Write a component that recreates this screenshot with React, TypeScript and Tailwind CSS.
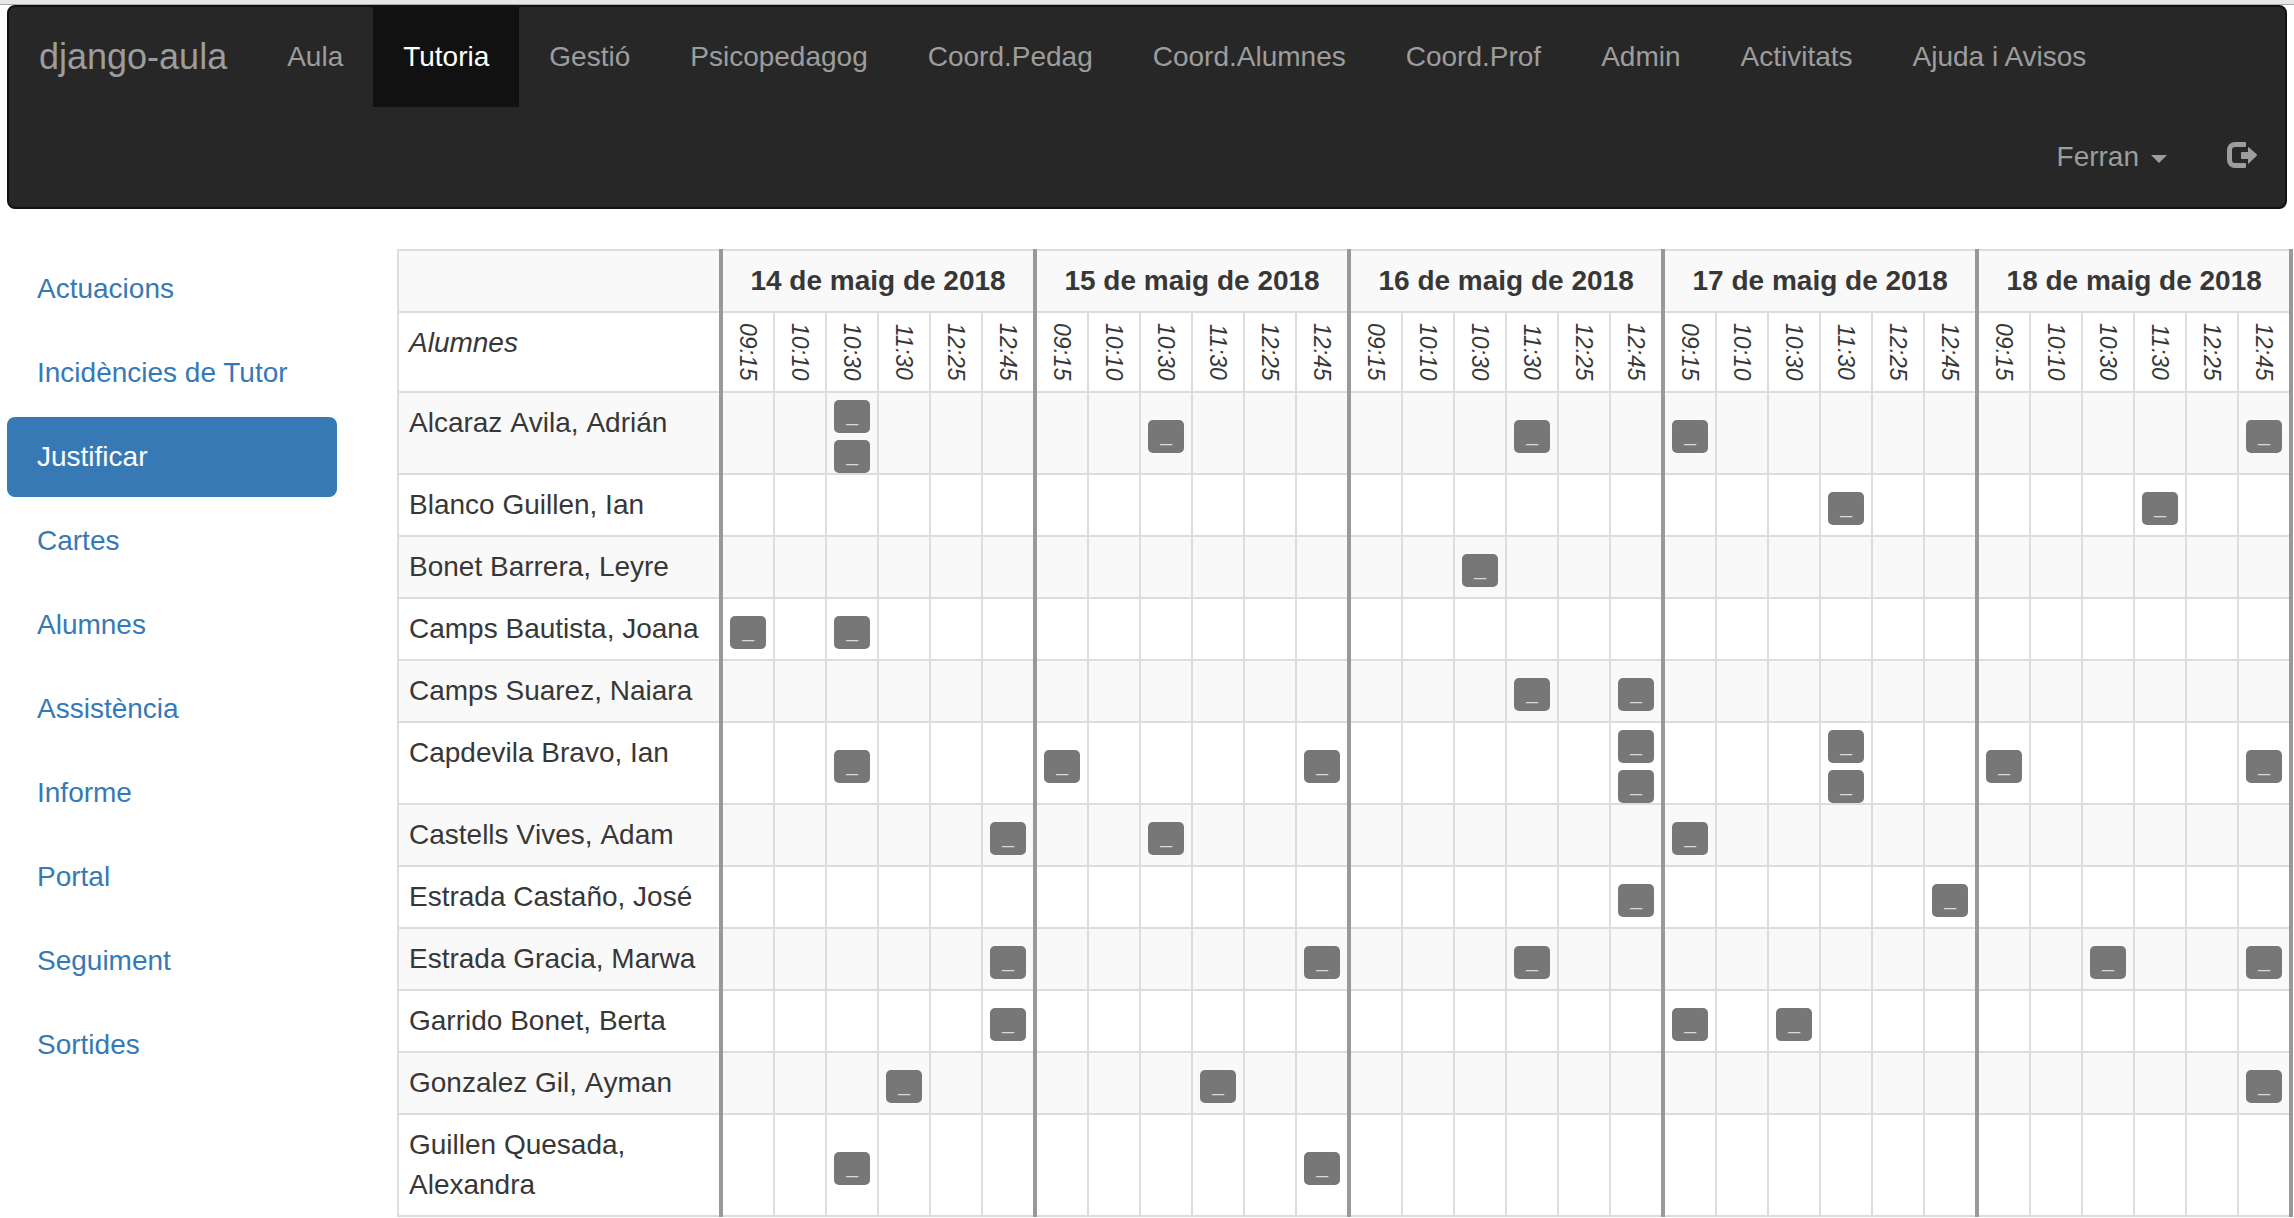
import React from 'react';

const NAV = ['Aula', 'Tutoria', 'Gestió', 'Psicopedagog', 'Coord.Pedag', 'Coord.Alumnes', 'Coord.Prof', 'Admin', 'Activitats', 'Ajuda i Avisos'];
const SIDE = ['Actuacions', 'Incidències de Tutor', 'Justificar', 'Cartes', 'Alumnes', 'Assistència', 'Informe', 'Portal', 'Seguiment', 'Sortides'];
const DAYS = [14, 15, 16, 17, 18].map((d) => `${d} de maig de 2018`);
const HOURS = ['09:15', '10:10', '10:30', '11:30', '12:25', '12:45'];

type Student = { name: string; marks: Record<string, number> };

/* Keys of `marks` are "day-hour" indexes; values are the number of absences. */
const STUDENTS: Student[] = [
  { name: 'Alcaraz Avila, Adrián', marks: { '0-2': 2, '1-2': 1, '2-3': 1, '3-0': 1, '4-5': 1 } },
  { name: 'Blanco Guillen, Ian', marks: { '3-3': 1, '4-3': 1 } },
  { name: 'Bonet Barrera, Leyre', marks: { '2-2': 1 } },
  { name: 'Camps Bautista, Joana', marks: { '0-0': 1, '0-2': 1 } },
  { name: 'Camps Suarez, Naiara', marks: { '2-3': 1, '2-5': 1 } },
  { name: 'Capdevila Bravo, Ian', marks: { '0-2': 1, '1-0': 1, '1-5': 1, '2-5': 2, '3-3': 2, '4-0': 1, '4-5': 1 } },
  { name: 'Castells Vives, Adam', marks: { '0-5': 1, '1-2': 1, '3-0': 1 } },
  { name: 'Estrada Castaño, José', marks: { '2-5': 1, '3-5': 1 } },
  { name: 'Estrada Gracia, Marwa', marks: { '0-5': 1, '1-5': 1, '2-3': 1, '4-2': 1, '4-5': 1 } },
  { name: 'Garrido Bonet, Berta', marks: { '0-5': 1, '3-0': 1, '3-2': 1 } },
  { name: 'Gonzalez Gil, Ayman', marks: { '0-3': 1, '1-3': 1, '4-5': 1 } },
  { name: 'Guillen Quesada, Alexandra', marks: { '0-2': 1, '1-5': 1 } },
];

function hourBorder(h: number) {
  if (h === 0) return 'border-y-2 border-l-4 border-r-2 border-y-[#ddd] border-l-[#999] border-r-[#ddd]';
  if (h === HOURS.length - 1) return 'border-y-2 border-l-2 border-r-4 border-y-[#ddd] border-l-[#ddd] border-r-[#999]';
  return 'border-2 border-[#ddd]';
}

function Mark({ label }: { label: string }) {
  return (
    <div className="flex h-10 items-end justify-center">
      <button type="button" aria-label={label} className="h-[33px] w-9 rounded-[5px] bg-[#777] pb-[6px] text-center text-[21px] leading-[27px] text-[#d8d8d8]">
        _
      </button>
    </div>
  );
}

function Navbar() {
  return (
    <nav className="mx-[7px] flex flex-wrap rounded-lg border-2 border-[#111] bg-[#272727] text-[#9d9d9d]">
      <a href="#" className="px-[30px] py-[30px] text-4xl leading-10">django-aula</a>
      <ul className="flex flex-wrap">
        {NAV.map((item) => (
          <li key={item}>
            <a
              href="#"
              className={item === 'Tutoria' ? 'block bg-[#111] px-[30px] py-[30px] text-white' : 'block px-[30px] py-[30px]'}
            >
              {item}
            </a>
          </li>
        ))}
      </ul>
      <div className="flex w-full justify-end">
        <button type="button" className="flex items-center px-[30px] py-[30px]">
          Ferran
          <span className="ml-3 mt-1 border-x-8 border-t-8 border-x-transparent border-t-[#9d9d9d]" />
        </button>
        <a href="#" aria-label="Surt" className="flex items-center py-[30px] pr-7 pl-[30px]">
          <svg viewBox="0 0 30 26" className="mb-1 h-[26px] w-[30px]" fill="currentColor">
            <path d="M18 0a1 1 0 0 1 1 1v3a1 1 0 0 1-1 1H8a3 3 0 0 0-3 3v10a3 3 0 0 0 3 3h10a1 1 0 0 1 1 1v3a1 1 0 0 1-1 1H8a8 8 0 0 1-8-8V8a8 8 0 0 1 8-8z" />
            <path d="M21 5.500q0-.8.7-.2l8 7q.6.700 0 1.400l-8 7.800q-.7.600-.7-.3V17h-6a1 1 0 0 1-1-1v-5a1 1 0 0 1 1-1h6z" />
          </svg>
        </a>
      </div>
    </nav>
  );
}

function Sidebar() {
  return (
    <ul className="ml-[7px] flex w-[330px] shrink-0 flex-col gap-1">
      {SIDE.map((item) => (
        <li key={item}>
          <a
            href="#"
            className={
              item === 'Justificar'
                ? 'block rounded-lg bg-[#3779b5] px-[30px] py-5 text-white'
                : 'block rounded-lg px-[30px] py-5 text-[#3779b5]'
            }
          >
            {item}
          </a>
        </li>
      ))}
    </ul>
  );
}

function AbsenceTable() {
  return (
    <table className="w-full table-fixed border-collapse [font-kerning:none]">
      <colgroup>
        <col className="w-[323px]" />
        {DAYS.map((d) => (
          <React.Fragment key={d}>
            <col className="w-[53px]" />
            <col className="w-[52px]" span={4} />
            <col className="w-[53px]" />
          </React.Fragment>
        ))}
      </colgroup>
      <thead>
        <tr className="bg-[#f9f9f9]">
          <td className="border-2 border-[#ddd]" />
          {DAYS.map((d) => (
            <th key={d} colSpan={6} scope="colgroup" className="border-x-4 border-y-2 border-x-[#999] border-y-[#ddd] py-[10px] text-center font-bold whitespace-nowrap">
              {d}
            </th>
          ))}
        </tr>
        <tr className="h-20">
          <th scope="col" className="border-2 border-[#ddd] p-[10px] text-left align-top font-normal italic">Alumnes</th>
          {DAYS.map((d) =>
            HOURS.map((h, i) => (
              <th key={d + h} scope="col" className={hourBorder(i) + ' p-0 align-middle font-normal'}>
                <div className="flex items-center justify-center">
                  <span className="text-[23px] leading-7 italic [writing-mode:vertical-rl]">{h}</span>
                </div>
              </th>
            )),
          )}
        </tr>
      </thead>
      <tbody>
        {STUDENTS.map((s) => (
          <tr key={s.name} className="odd:bg-[#f9f9f9]">
            <th scope="row" className="border-2 border-[#ddd] p-[10px] text-left align-top font-normal">{s.name}</th>
            {DAYS.map((d, di) =>
              HOURS.map((h, hi) => (
                <td key={d + h} className={hourBorder(hi) + ' p-0 align-middle'}>
                  {Array.from({ length: s.marks[`${di}-${hi}`] ?? 0 }, (_, k) => (
                    <Mark key={k} label={`${s.name}, ${d}, ${h}`} />
                  ))}
                </td>
              )),
            )}
          </tr>
        ))}
      </tbody>
    </table>
  );
}

export default function App() {
  return (
    <div className="min-h-screen bg-white font-['Liberation_Sans',Arial,sans-serif] text-[28px] leading-10 text-[#373737]">
      <div className="h-[5px] border-b border-[#aaa] bg-[#e7e7e5]" />
      <Navbar />
      <div className="mt-10 flex">
        <Sidebar />
        <main className="ml-[60px] min-w-0 flex-1 pr-px">
          <AbsenceTable />
        </main>
      </div>
    </div>
  );
}
